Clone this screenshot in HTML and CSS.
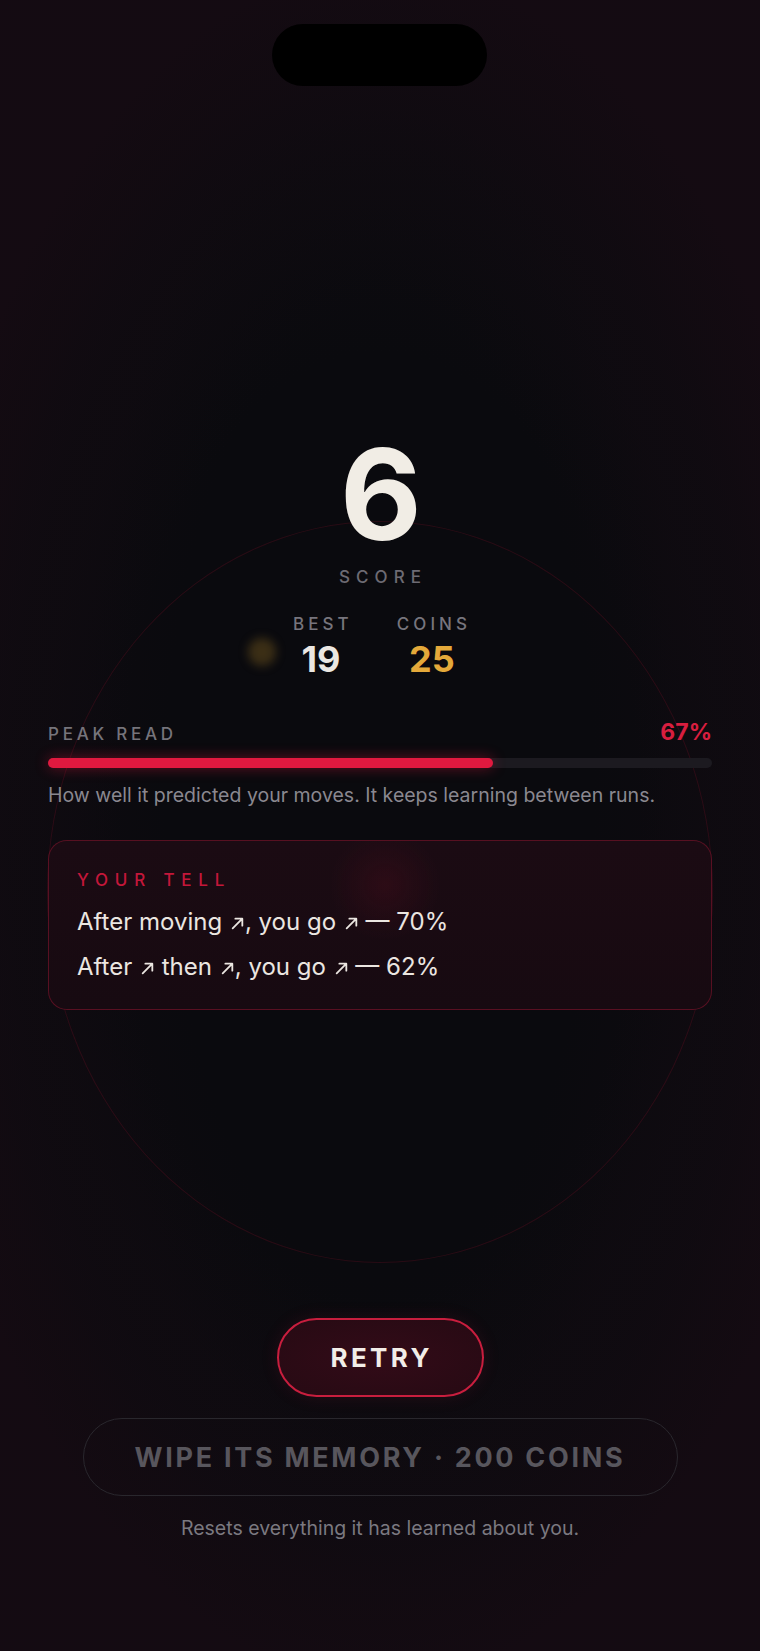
FILE: index.html
```html
<!DOCTYPE html>
<html lang="en">
<head>
<meta charset="utf-8">
<title>Game Over</title>
<link rel="stylesheet" href="styles.css">
</head>
<body>
<div class="screen">
  <div class="vignette"></div>
  <div class="ring"></div>
  <div class="coin-glow"></div>
  <div class="island"></div>

  <main class="content">
    <section class="score">
      <div class="score-value">6</div>
      <div class="score-label">SCORE</div>
    </section>

    <section class="stats">
      <div class="stat">
        <div class="stat-label">BEST</div>
        <div class="stat-value">19</div>
      </div>
      <div class="stat">
        <div class="stat-label">COINS</div>
        <div class="stat-value gold">25</div>
      </div>
    </section>

    <section class="read">
      <div class="read-head">
        <span class="read-label">PEAK READ</span>
        <span class="read-pct">67%</span>
      </div>
      <div class="bar"><div class="bar-fill" style="width:67%"></div></div>
      <p class="read-desc">How well it predicted your moves. It keeps learning between runs.</p>
    </section>

    <section class="tell">
      <div class="tell-title">YOUR TELL</div>
      <p class="tell-line">After moving <svg class="arr" viewBox="0 0 14 14" aria-label="↗"><path d="M2.5 11.5 L11.5 2.5 M5 2.5 H11.5 V9"/></svg>, you go <svg class="arr" viewBox="0 0 14 14" aria-label="↗"><path d="M2.5 11.5 L11.5 2.5 M5 2.5 H11.5 V9"/></svg> — 70%</p>
      <p class="tell-line">After <svg class="arr" viewBox="0 0 14 14" aria-label="↗"><path d="M2.5 11.5 L11.5 2.5 M5 2.5 H11.5 V9"/></svg> then <svg class="arr" viewBox="0 0 14 14" aria-label="↗"><path d="M2.5 11.5 L11.5 2.5 M5 2.5 H11.5 V9"/></svg>, you go <svg class="arr" viewBox="0 0 14 14" aria-label="↗"><path d="M2.5 11.5 L11.5 2.5 M5 2.5 H11.5 V9"/></svg> — 62%</p>
    </section>

    <section class="actions">
      <button class="retry">RETRY</button>
      <button class="wipe">WIPE ITS MEMORY · 200 COINS</button>
      <p class="wipe-note">Resets everything it has learned about you.</p>
    </section>
  </main>
</div>
</body>
</html>
```
FILE: styles.css
```css
* { box-sizing: border-box; }
html, body { margin: 0; padding: 0; }
body {
  background: #0c0a0e;
  font-family: Inter, "Noto Sans", "Liberation Sans", sans-serif;
  color: #ebe7e2;
}
.screen {
  position: relative;
  width: 760px;
  height: 1651px;
  overflow: hidden;
  background:
    radial-gradient(ellipse 62% 52% at 50% 50%, #0a0a0e 0%, #0a0a0e 55%, #0e0b10 80%, #140b12 100%);
}
.vignette {
  position: absolute;
  inset: 0;
  background:
    radial-gradient(ellipse 40% 42% at 50% 48%, rgba(10,10,14,0.0) 70%, rgba(20,10,18,0.25) 100%);
  pointer-events: none;
}
.ring {
  position: absolute;
  left: 47px;
  top: 521px;
  width: 666px;
  height: 742px;
  border-radius: 50%;
  border: 1.5px solid rgba(150, 20, 45, 0.22);
  pointer-events: none;
}
.coin-glow {
  position: absolute;
  left: 248px;
  top: 638px;
  width: 28px;
  height: 28px;
  border-radius: 50%;
  background: rgba(120, 90, 30, 0.45);
  filter: blur(5px);
}
.island {
  position: absolute;
  left: 272px;
  top: 24px;
  width: 215px;
  height: 62px;
  border-radius: 31px;
  background: #000;
}

.content {
  position: relative;
  display: flex;
  flex-direction: column;
  padding: 431px 48px 0;
}

.score {
  display: flex;
  flex-direction: column;
  align-items: center;
}
.score-value {
  font-size: 126px;
  line-height: 126px;
  font-weight: 700;
  color: #f1ede5;
  letter-spacing: -2px;
}
.score-label {
  margin-top: 9px;
  font-size: 17px;
  line-height: 22px;
  letter-spacing: 0.36em;
  margin-right: -0.36em;
  color: #6d6b73;
  font-weight: 500;
}

.stats {
  display: flex;
  justify-content: center;
  gap: 48px;
  margin-top: 25px;
}
.stat {
  display: flex;
  flex-direction: column;
  align-items: center;
}
.stat-label {
  font-size: 17px;
  line-height: 22px;
  letter-spacing: 0.24em;
  margin-right: -0.24em;
  color: #77757d;
  font-weight: 500;
}
.stat-value {
  margin-top: 3px;
  font-size: 36px;
  line-height: 42px;
  font-weight: 700;
  color: #ebe7e2;
}
.stat-value.gold { color: #e4a93a; }

.read { margin-top: 38px; }
.read-head {
  display: flex;
  justify-content: space-between;
  align-items: baseline;
  line-height: 28px;
}
.read-label {
  font-size: 17px;
  letter-spacing: 0.22em;
  color: #76747b;
  font-weight: 500;
}
.read-pct {
  font-size: 23px;
  font-weight: 700;
  color: #d81e3f;
}
.bar {
  margin-top: 10px;
  height: 10px;
  border-radius: 5px;
  background: #1c1a20;
}
.bar-fill {
  height: 100%;
  border-radius: 5px;
  background: #e0193f;
  box-shadow: 0 0 14px rgba(224, 25, 63, 0.45);
}
.read-desc {
  margin: 14px 0 0;
  font-size: 19.5px;
  line-height: 26px;
  color: #8a8890;
}

.tell {
  margin-top: 32px;
  height: 170px;
  border-radius: 19px;
  border: 1.5px solid rgba(140, 22, 48, 0.55);
  background:
    radial-gradient(circle 55px at 336px 44px, rgba(110, 15, 35, 0.22), rgba(110,15,35,0) 100%),
    linear-gradient(180deg, #1b0b13 0%, #170a11 100%);
  padding: 28px 28px 0;
}
.tell-title {
  font-size: 17px;
  line-height: 22px;
  letter-spacing: 0.4em;
  color: #c4173a;
  font-weight: 500;
}
.tell-line {
  margin: 17px 0 0;
  font-size: 24px;
  line-height: 28px;
  color: #ebe6e1;
}
.tell-line + .tell-line { margin-top: 17px; }
.arr {
  width: 15px;
  height: 15px;
  margin: 0 0 0 1px;
  vertical-align: -1px;
  fill: none;
  stroke: #ebe6e1;
  stroke-width: 1.7;
  stroke-linecap: round;
  stroke-linejoin: round;
}

.actions {
  display: flex;
  flex-direction: column;
  align-items: center;
  margin-top: 308px;
}
.retry {
  width: 207px;
  height: 79px;
  border-radius: 40px;
  border: 2px solid #c81e3e;
  background: radial-gradient(ellipse at 50% 50%, #330b18 0%, #260a13 100%);
  box-shadow: 0 0 18px rgba(200, 30, 62, 0.12);
  color: #f2ede8;
  font-family: inherit;
  font-size: 26px;
  font-weight: 700;
  letter-spacing: 0.13em;
  padding: 0 0 0 0.13em;
}
.wipe {
  margin-top: 21px;
  width: 595px;
  height: 78px;
  border-radius: 39px;
  border: 1.5px solid #29272d;
  background: transparent;
  color: #58565d;
  font-family: inherit;
  font-size: 27px;
  font-weight: 700;
  letter-spacing: 0.1em;
}
.wipe-note {
  margin: 19px 0 0;
  font-size: 19.5px;
  line-height: 26px;
  color: #7b7980;
}
```
